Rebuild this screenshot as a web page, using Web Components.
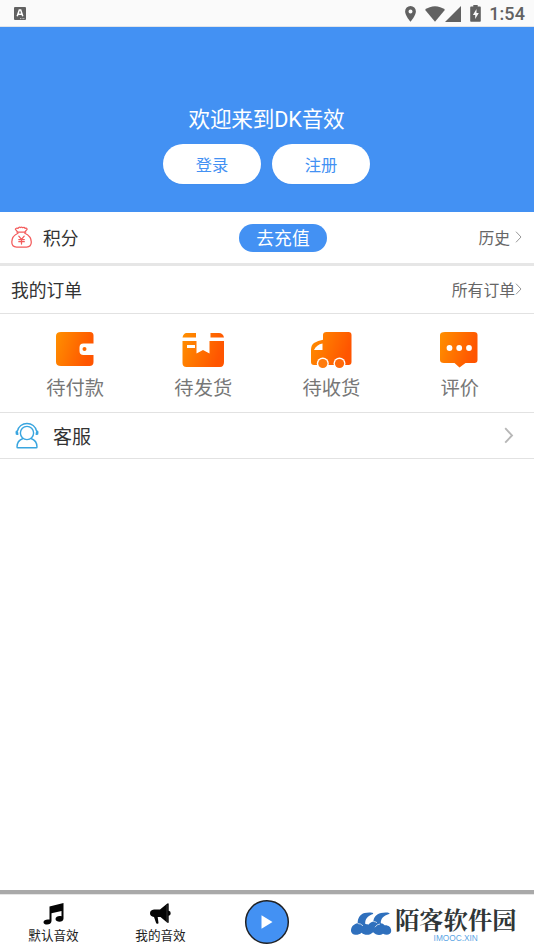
<!DOCTYPE html>
<html lang="zh-CN"><head><meta charset="utf-8"><title>DK音效</title>
<style>
html,body{margin:0;height:100%;background:#fff}
body{font-family:Roboto,"Noto Sans CJK SC",sans-serif;color:#333}
</style></head><body>
<dk-app></dk-app>
<script>
const define=(name,html,init)=>customElements.define(name,class extends HTMLElement{
  constructor(){super();this.attachShadow({mode:'open'}).innerHTML=html;}
  connectedCallback(){if(init)init(this,this.shadowRoot);}
});
const grad='<defs><linearGradient id="g" x1="0" y1="0" x2="1" y2=".3"><stop offset="0" stop-color="#ff9000"/><stop offset="1" stop-color="#ff5500"/></linearGradient></defs>';
const ICONS={
 input:[12,13,'<rect width="12" height="13" rx="1" fill="#616161"/><path d="M3.2 9.2 5.3 3h1.4l2.1 6.2M4 7.2h4" fill="none" stroke="#fff" stroke-width="1.5"/><path d="M6 11.6h5" stroke="#ddd" stroke-width=".8" stroke-dasharray="1 .6"/>'],
 pin:[11,16,'<path fill="#616161" fill-rule="evenodd" d="M5.5 0A5.4 5.4 0 0 0 .1 5.4C.1 9.5 5.5 15.7 5.5 15.7s5.4-6.2 5.4-10.3A5.4 5.4 0 0 0 5.5 0Zm0 3.4a2 2 0 1 1 0 4 2 2 0 0 1 0-4Z"/>'],
 wifi:[20,16,'<path fill="#616161" d="M0 3.8C5.8-.9 14.200-.9 20 3.800L10 15.800Z"/>'],
 signal:[16,16,'<path fill="#616161" d="M16 0v16H0Z"/>'],
 battery:[11,17,'<path fill="#616161" fill-rule="evenodd" d="M3.300 0h4.400v1.600H10q.8 0 .8.800V16q0 .8-.8.800H1q-.8 0-.8-.8V2.400q0-.8.8-.8h2.300ZM6.500 4 2.900 9.900h2.300V14l3.600-6H6.500Z"/>'],
 bag:[21,22,'<g fill="none" stroke="#f35b5b" stroke-width="1.250" stroke-linejoin="round" stroke-linecap="round"><path d="M6.600 5.800 4.400 3.300q.6-1.700 2.600-.9Q8 .6 9.500 1.600q1-.9 2.200.1 1.600-1 2.400.7 2-.7 2 1l-2.200 2.500M5.900 6h8.900M7 7.200C3 9 .8 12.300.8 16c0 3.500 1.700 5 4.800 5h10c3.200 0 4.700-1.700 4.700-5 0-3.700-2.400-7-6.500-8.800"/><path d="m7.800 10.200 2.700 3.200 2.700-3.200M10.500 13.400V18M7.800 13.600h5.500M7.800 15.700h5.500"/></g>'],
 chev:[7,12,'<path d="m1 .7 5 5.300-5 5.300" fill="none" stroke="#999" stroke-width="1"/>'],
 chevBig:[10,17,'<path d="m1.200 1.200 6.800 7.200-6.800 7.200" fill="none" stroke="#b7b7b7" stroke-width="1.900"/>'],
 wallet:[46,40,grad+'<g transform="translate(2)"><path fill="url(#g)" d="M7 3h29q3.500 0 3.500 3.500V14.500H29.500q-4 0-4 4v3.500q0 4 4 4h10v7q0 4-4 4H7q-5 0-5-4V7q0-4 5-4Z"/><circle cx="30.500" cy="20" r="2" fill="#ff6a00"/></g>'],
 box:[46,40,grad+'<path transform="translate(1)" fill="url(#g)" fill-rule="evenodd" d="M5.500 4H15v4.500H1.500Q2.500 4 5.500 4ZM29.500 4H38q4 0 5 4.500H29.500ZM1.500 12H15.500v12.500l6.500-3.500 6.500 3.500V12h14.500v21q0 5-4 5H5.500q-4 0-4-4Zm4.500 4v3h8v-3Z"/>'],
 truck:[46,40,grad+'<g transform="translate(.5)"><path fill="url(#g)" fill-rule="evenodd" d="M18 3h22q3 0 3 3v27q0 3-3 3H5.500q-3 0-3-3V21q0-5 3-7 4-2.500 9-3.200V6q0-3 3.500-3ZM14 14.500Q8 15.500 5.500 21H14Z"/><circle cx="14.300" cy="34.500" r="6" fill="#fff"/><circle cx="31" cy="34.500" r="6" fill="#fff"/><circle cx="14.300" cy="34.500" r="4.600" fill="#ff7b0c"/><circle cx="31" cy="34.500" r="4.600" fill="#ff6a0a"/></g>'],
 chat:[46,40,grad+'<g transform="translate(1)"><path fill="url(#g)" d="M7 3h29q3.500 0 3.500 3v25q0 3-3 3h-9l-6 4.500-5-4.500H6q-4 0-4-3V6q0-3 5-3Z"/><g fill="#fff"><circle cx="11.500" cy="19" r="2.900"/><circle cx="21.200" cy="19" r="2.900"/><circle cx="31" cy="19" r="2.900"/></g></g>'],
 agent:[24,27,'<g fill="none" stroke="#39a5df" stroke-width="1.400"><circle cx="12" cy="11" r="6.600"/><path d="M2.300 9.500C4-1.200 20-1.200 21.700 9.500M8 16.500Q2 18.500 2 25q0 .8.800.8h18.400q.8 0 .8-.8 0-6.500-6-8.500"/></g><path d="M1.400 8.500q2.200.2 2 4.600H2Q.3 13 .5 10.500q0-2 .9-2ZM22.600 8.500q-2.200.2-2 4.600H22q1.700-.1 1.500-2.600 0-2-.9-2Z" fill="#39a5df"/>'],
 music:[21,22,'<path fill="#050505" d="M6.500 3.500 20.500 0v15.500c0 4.500-8 4-8 .5 0-2.500 3.500-3.500 6-2.700V8L8.500 10.300V18c0 4.500-8 4.500-8 1.200 0-2.500 3.500-3.200 6-2.600Z"/>'],
 horn:[22,22,'<path fill="#050505" d="M4 6.500h6L17 .7q1.700-1 1.700.6v6.500q2 .3 2 2.400t-2 2.500V19q0 1.600-1.700.5L10.500 14H7.700l.8 6q0 1-1.400.8-.8 0-1-.8L4 14Q0 13.300 0 10.200 0 7 4 6.500Z"/><path d="M17 2v17" stroke="#666" stroke-width=".5"/>'],
 play:[46,46,'<circle cx="23" cy="23" r="21.300" fill="#4391f3" stroke="#202124" stroke-width="1.500"/><path d="M17.500 16.300 28.500 23l-11 6.700Z" fill="#fff"/>'],
 brand:[41,24,'<path fill="#2f70bd" d="M22 2C23.500.3 17 .2 13.500 1 9 2.300 6.500 6.500 6.700 11.300 2.500 12 0 15 0 18.600c0 4.700 6.500 5.600 10.600 2.200 3 2.800 8.300 2.800 11.500-.5 2.500 2.800 7 3.400 9.900 1.400 3.500 2.100 8 1 8.200-2.400.2-4.300-3-6.300-6.600-6-1-1.200-2.200-1.900-3.800-2C29.500 7 32.500 3.500 38 2 40.500.3 33.500 0 30 .9 25 2 22.500 5.500 22.400 9.500 20 10 18.600 11 17.700 12.600L14.300 12C13.800 7.500 16.500 3.800 22 2Z"/><path d="M6.700 11.500Q9.800 11.500 12 13.800M22.400 9.500Q24.500 9.500 26 10.700M24 15.200Q26 12 29 12" fill="none" stroke="#fff" stroke-width=".7"/>']
};
define('dk-icon','<style>:host{display:block;flex:none;line-height:0}svg{display:block;overflow:visible}</style><span></span>',(el,r)=>{
 const [w,h,s]=ICONS[el.getAttribute('name')];
 r.querySelector('span').innerHTML=`<svg width="${w}" height="${h}" viewBox="0 0 ${w} ${h}">${s}</svg>`;
});
define('dk-status',`<style>:host{display:flex;box-sizing:border-box;height:27px;background:#fafafa;align-items:center;padding:1px 9px 0 14px;border-bottom:1px solid #e0e4ea;color:#616161;font:500 18px/27px Roboto,sans-serif}
.pin{margin-left:auto;margin-right:9px}.sig{margin-right:9px}.bat{margin-right:8px}.t{letter-spacing:.1px}</style>
<dk-icon name="input"></dk-icon><dk-icon class="pin" name="pin"></dk-icon><dk-icon name="wifi"></dk-icon><dk-icon class="sig" name="signal"></dk-icon><dk-icon class="bat" name="battery"></dk-icon><span class="t">1:54</span>`);
define('dk-button',`<style>:host{display:flex;width:98px;height:40px;border-radius:20px;background:#fff;color:#4391f3;align-items:center;justify-content:center;font-size:16.3px;box-shadow:0 1px 1px #2f79d322}</style><span><slot></slot></span>`);
define('dk-hero',`<style>:host{display:flex;flex-direction:column;align-items:center;box-sizing:border-box;height:185px;padding:77px 1px 0 0;background:#4391f3;color:#fff}
h1{margin:0;font-weight:400;font-size:21.6px;line-height:32px;letter-spacing:-.15px}div{display:flex;gap:11px;margin-top:8px}</style>
<h1><slot></slot></h1><div><dk-button>登录</dk-button><dk-button>注册</dk-button></div>`);
define('dk-row',`<style>:host{display:grid;grid-template-columns:1fr auto 1fr;align-items:center;box-sizing:border-box;padding:0 12px 0 11px;font-size:17.8px;line-height:26px}
.l,.r{display:flex;align-items:center;min-width:0}.r{justify-content:flex-end;color:#666;font-size:15.8px}</style>
<div class="l"><slot name="start"></slot></div><slot></slot><div class="r"><slot name="end"></slot></div>`);
define('dk-order',`<style>:host{display:flex;flex-direction:column;align-items:center;font-size:19.3px;line-height:28px;color:#777}dk-icon{margin-bottom:6px}</style>
<span class="i"></span><slot></slot>`,(el,r)=>{r.querySelector('.i').innerHTML=`<dk-icon name="${el.getAttribute('icon')}"></dk-icon>`;});
define('dk-tab',`<style>:host{display:flex;flex-direction:column;align-items:center;width:107px;padding-top:9px;font-size:12.600px;line-height:20px;color:#222}.i{height:23px}</style><span class="i"></span><slot></slot>`,(el,r)=>{r.querySelector('.i').innerHTML=`<dk-icon name="${el.getAttribute('icon')}"></dk-icon>`;});
define('dk-brand',`<style>:host{display:flex;align-items:flex-start;gap:3px;margin-left:61px;padding-top:12px}
dk-icon{margin-top:6px}.w{display:flex;flex-direction:column;align-items:center}b{font:700 24.300px/25px "Noto Serif CJK SC","Noto Sans CJK SC",serif;color:#303637;white-space:nowrap}small{font:8.300px/9px "Liberation Sans",sans-serif;color:#5aa5e4;margin-top:3px}</style>
<dk-icon name="brand"></dk-icon><div class="w"><b>陌客软件园</b><small>IMOOC.XIN</small></div>`);
define('dk-tabbar',`<style>:host{display:flex;box-sizing:border-box;height:60px;border-top:4px solid #a9a9a9;box-shadow:inset 0 1px #e6e6e6;background:#fff}.play{margin:5px 0 0 30px}</style>
<dk-tab icon="music">默认音效</dk-tab><dk-tab icon="horn">我的音效</dk-tab><dk-icon class="play" name="play"></dk-icon><dk-brand></dk-brand>`);
define('dk-app',`<style>:host{display:flex;flex-direction:column;height:950px;width:534px;overflow:hidden;background:#fff}
.points{height:54px;border-bottom:3px solid #e6e6e6}.title{height:48px;border-bottom:1px solid #e2e2e2}
.points dk-icon[name=bag]{margin:0 11px 2px 0}.pill{width:88px;height:28px;line-height:29px;border-radius:14px;background:#4391f3;color:#fff;text-align:center;margin-left:33px}
.points span[slot],.title span[slot]{padding-top:2px}dk-icon[name=chev]{margin-bottom:1px}
.orders{display:grid;grid-template-columns:repeat(4,128.200px);padding:15px 0 0 11px;height:99px;box-sizing:border-box;border-bottom:1px solid #e2e2e2}
.service{height:46px;border-bottom:1px solid #e2e2e2;font-size:19px;padding-left:15px}.service dk-icon[name=agent]{margin-right:14px}.service span[slot]{padding-top:4px}
dk-tabbar{margin-top:auto}</style>
<dk-status></dk-status><dk-hero>欢迎来到DK音效</dk-hero>
<dk-row class="points"><dk-icon slot="start" name="bag"></dk-icon><span slot="start">积分</span><span class="pill">去充值</span><span slot="end" style="margin-right:5px">历史</span><dk-icon slot="end" name="chev"></dk-icon></dk-row>
<dk-row class="title"><span slot="start">我的订单</span><span></span><span slot="end">所有订单</span><dk-icon slot="end" name="chev"></dk-icon></dk-row>
<div class="orders"><dk-order icon="wallet">待付款</dk-order><dk-order icon="box">待发货</dk-order><dk-order icon="truck">待收货</dk-order><dk-order icon="chat">评价</dk-order></div>
<dk-row class="service"><dk-icon slot="start" name="agent"></dk-icon><span slot="start">客服</span><span></span><dk-icon slot="end" name="chevBig" style="margin-right:8px"></dk-icon></dk-row>
<dk-tabbar></dk-tabbar>`);
</script></body></html>
